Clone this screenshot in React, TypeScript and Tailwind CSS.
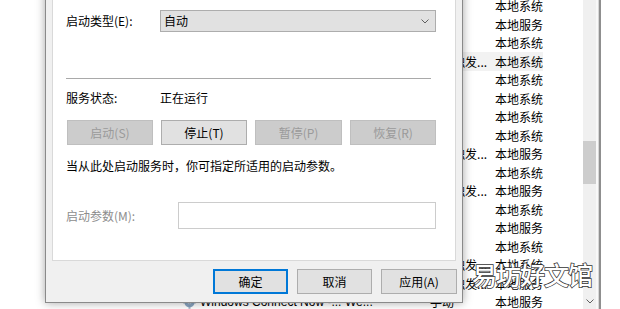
import React from "react";

const rows: { who: string; trig?: boolean; hl?: boolean; last?: boolean }[] = [
  { who: "本地系统" },
  { who: "本地服务" },
  { who: "本地系统" },
  { who: "本地系统", trig: true, hl: true },
  { who: "本地系统" },
  { who: "本地系统" },
  { who: "本地系统" },
  { who: "本地系统" },
  { who: "本地服务", trig: true },
  { who: "本地系统" },
  { who: "本地服务", trig: true },
  { who: "本地系统" },
  { who: "本地服务" },
  { who: "本地系统" },
  { who: "本地系统", trig: true },
  { who: "本地服务", trig: true },
  { who: "本地服务", last: true },
];

function Chevron({ className }: { className?: string }) {
  return (
    <svg className={className} width="8" height="5" viewBox="0 0 8 5" fill="none">
      <path d="M0.5 0.5 L4 4 L7.5 0.5" stroke="#606060" strokeWidth="1" />
    </svg>
  );
}

function Gear() {
  return (
    <svg width="13" height="13" viewBox="0 0 13 13">
      <circle cx="6.5" cy="6.5" r="5" fill="#8aa6c2" />
      <circle cx="6.5" cy="6.5" r="2" fill="#e8eef5" />
      <rect x="5.5" y="0" width="2" height="13" fill="#7f98b3" opacity="0.6" />
      <rect x="0" y="5.5" width="13" height="2" fill="#7f98b3" opacity="0.6" />
    </svg>
  );
}

export default function App() {
  const cjk = "font-['Noto_Sans_CJK_SC','Noto_Sans',sans-serif]";
  return (
    <div className={`relative w-[620px] h-[309px] overflow-hidden bg-white text-[12px] text-black ${cjk}`}>
      {/* background services window */}
      <div className="absolute inset-0 flex">
        <div className="flex flex-col w-[583px] mt-[-3.25px]">
          {rows.map((r, i) => (
            <div key={i} className="flex items-center h-[18.5px] w-[543px] shrink-0">
              <div className="w-[183px] shrink-0" />
              <div className={`flex items-center h-full w-[360px] shrink-0 ${r.hl ? "bg-[#f2f2f2]" : ""}`}>
                <div className="w-[162px] shrink-0 flex items-center gap-[4px]">
                  {r.last && (
                    <>
                      <Gear />
                      <span className="font-['Liberation_Sans',sans-serif] leading-none whitespace-nowrap">Windows Connect Now -...</span>
                    </>
                  )}
                </div>
                <div className="w-[80px] shrink-0 font-['Liberation_Sans',sans-serif] leading-none">{r.last ? "We..." : ""}</div>
                <div className="w-[70px] shrink-0 leading-none whitespace-nowrap">
                  {r.trig ? "自动(触发..." : r.last ? <span className="pl-[5px]">手动</span> : ""}
                </div>
                <div className="w-[48px] shrink-0 leading-none whitespace-nowrap">{r.who}</div>
              </div>
            </div>
          ))}
        </div>
        <div className="w-[13px] h-full bg-[#f0f0f0] relative flex flex-col">
          <div className="mt-[141px] h-[43px] bg-[#cdcdcd]" />
          <div className="mt-auto mb-[5px] flex justify-center">
            <Chevron />
          </div>
        </div>
        <div className="w-[2px] h-full bg-[#f8f8f8]" />
        <div className="w-px h-full bg-[#d6d6d6]" />
        <div className="w-[2px] h-full bg-[#8f8f8f]" />
        <div className="flex-1 h-full bg-white" />
      </div>

      {/* property dialog */}
      <div className="absolute left-[45px] top-[-20px] w-[418px] h-[323px] border border-[#8a8a8a] bg-[#f0f0f0] shadow-[0_0_9px_rgba(0,0,0,0.35)] flex flex-col px-[6px] pt-[10px]">
        <div className="h-[270px] shrink-0 border border-[#d9d9d9] bg-white pl-[13px] pt-[18px] flex flex-col">
          <div className="flex items-center h-[22px]">
            <div className="w-[94px] leading-none">启动类型(E):</div>
            <div className="w-[276px] h-[22px] border border-[#adadad] bg-[#e1e1e1] flex items-center pl-[3px] pr-[6px]">
              <span className="flex-1 leading-none">自动</span>
              <Chevron />
            </div>
          </div>
          <div className="mt-[46px] h-px w-[365px] bg-[#a9a9a9]" />
          <div className="mt-[11px] h-[16px] flex items-center">
            <div className="w-[94px] leading-none">服务状态:</div>
            <div className="leading-none">正在运行</div>
          </div>
          <div className="mt-[14px] flex gap-[8px] ml-px">
            <div className="w-[86px] h-[25px] border border-[#bfbfbf] bg-[#cccccc] text-[#9a9a9a] flex items-center justify-center">启动(S)</div>
            <div className="w-[86px] h-[25px] border border-[#adadad] bg-[#e1e1e1] flex items-center justify-center">停止(T)</div>
            <div className="w-[87px] h-[25px] border border-[#bfbfbf] bg-[#cccccc] text-[#9a9a9a] flex items-center justify-center">暂停(P)</div>
            <div className="w-[86px] h-[25px] border border-[#bfbfbf] bg-[#cccccc] text-[#9a9a9a] flex items-center justify-center">恢复(R)</div>
          </div>
          <div className="mt-[13px] h-[16px] flex items-center leading-none">当从此处启动服务时，你可指定所适用的启动参数。</div>
          <div className="mt-[28px] flex items-center">
            <div className="w-[112px] leading-none text-[#8d8d8d]">启动参数(M):</div>
            <div className="w-[258px] h-[27px] border border-[#cccccc] bg-white" />
          </div>
        </div>
        <div className="mt-[8px] flex justify-end gap-[9px] mr-[-1px]">
          <div className="w-[75px] h-[25px] border-2 border-[#0078d7] bg-[#e1e1e1] flex items-center justify-center">确定</div>
          <div className="w-[75px] h-[25px] border border-[#adadad] bg-[#e1e1e1] flex items-center justify-center">取消</div>
          <div className="w-[76px] h-[25px] border border-[#adadad] bg-[#e1e1e1] flex items-center justify-center">应用(A)</div>
        </div>
      </div>

      {/* watermark */}
      <div className="absolute left-[472px] top-[262px] text-[25px] font-medium leading-none text-white [-webkit-text-stroke:1.5px_#333333] [paint-order:stroke_fill] tracking-[-1px]">
        易坊好文馆
      </div>
    </div>
  );
}
